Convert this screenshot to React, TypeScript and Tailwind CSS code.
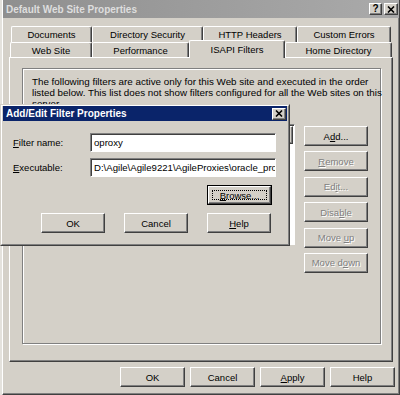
import React from "react";

const raised =
  "border border-t-white border-l-white border-r-[#404040] border-b-[#404040] shadow-[inset_-1px_-1px_0_#808080] bg-[#d4d0c8]";
const sunken =
  "border border-t-[#808080] border-l-[#808080] border-r-white border-b-white shadow-[inset_1px_1px_0_#404040]";

function Btn({
  className,
  children,
  disabled,
}: {
  className: string;
  children: React.ReactNode;
  disabled?: boolean;
}) {
  return (
    <div className={`${raised} flex items-center justify-center ${className}`}>
      <span
        className={
          disabled
            ? "text-[#808080] [text-shadow:1px_1px_0_#ffffff] whitespace-nowrap"
            : "text-black whitespace-nowrap"
        }
      >
        {children}
      </span>
    </div>
  );
}

function Tab({ className, children }: { className: string; children: React.ReactNode }) {
  return (
    <div
      className={`h-full flex items-center justify-center bg-[#d4d0c8] border-t border-l border-r border-t-white border-l-white border-r-[#404040] shadow-[inset_-1px_0_0_#808080] rounded-t-[2px] whitespace-nowrap ${className}`}
    >
      {children}
    </div>
  );
}

function CloseGlyph() {
  return (
    <svg width="8" height="7" viewBox="0 0 8 7">
      <path d="M1 0.5L7 6.5M7 0.5L1 6.5" stroke="#000" strokeWidth="1.6" fill="none" />
    </svg>
  );
}

export default function App() {
  return (
    <div className="w-[400px] h-[395px] flex bg-[#d4d0c8] relative overflow-hidden font-['Liberation_Sans',Arial,sans-serif] text-[9.5px] leading-[11px] text-black">
      <div className="w-[2px] h-full bg-[#e4e2dd]" />
      <div className="w-[398px] h-full flex flex-col border-l border-l-white border-r border-r-[#404040] border-b border-b-[#404040] shadow-[inset_-1px_-1px_0_#808080]">
        {/* title bar */}
        <div className="h-[18px] shrink-0 flex items-center bg-linear-to-r from-[#8f8f8f] to-[#aaaaaa] pl-[3px] pr-[1px]">
          <span className="flex-1 font-bold text-[10px] text-[#dedede] whitespace-nowrap">
            Default Web Site Properties
          </span>
          <div className={`${raised} w-[13px] h-[12px] flex items-center justify-center text-[10px] font-bold leading-none`}>
            ?
          </div>
          <div className={`${raised} ml-[2px] w-[14px] h-[12px] flex items-center justify-center`}>
            <CloseGlyph />
          </div>
        </div>

        {/* tabs back row */}
        <div className="mt-[8px] ml-[8px] h-[16px] flex">
          <Tab className="w-[81px]">Documents</Tab>
          <Tab className="w-[111px]">Directory Security</Tab>
          <Tab className="w-[94px]">HTTP Headers</Tab>
          <Tab className="w-[94px]">Custom Errors</Tab>
        </div>
        {/* tabs front row */}
        <div className="ml-[7px] h-[15px] flex items-end">
          <Tab className="w-[82px]">Web Site</Tab>
          <Tab className="w-[97px]">Performance</Tab>
          <div className="relative z-10 w-[96px] h-[18px] -mt-[2px] mb-[-1px] self-start flex items-start justify-center pt-[3px] bg-[#d4d0c8] border-t border-l border-r border-t-white border-l-white border-r-[#404040] shadow-[inset_-1px_0_0_#808080] rounded-t-[2px] whitespace-nowrap">
            ISAPI Filters
          </div>
          <Tab className="w-[107px]">Home Directory</Tab>
        </div>

        {/* panel */}
        <div className="ml-[6px] w-[384px] h-[305px] shrink-0 border border-t-white border-l-white border-r-[#404040] border-b-[#404040] shadow-[inset_-1px_-1px_0_#808080] flex flex-col">
          <div className="ml-[12px] mt-[10px] w-[359px] h-[276px] border border-[#808080] shadow-[inset_1px_1px_0_#ffffff,1px_1px_0_#ffffff] flex flex-col pl-[9px] pt-[7px]">
            <div className="h-[33px] text-[9.8px] leading-[11px] whitespace-nowrap">
              The following filters are active only for this Web site and executed in the order
              <br />
              listed below. This list does not show filters configured for all the Web sites on this
              <br />
              server.
            </div>
            <div className="mt-[15px] flex items-start">
              <div className={`${sunken} w-[263px] h-[121px] bg-white flex flex-col p-[1px]`}>
                <div className={`${raised} h-[18px] w-full`} />
              </div>
              <div className="ml-[9px] mt-[2px] flex flex-col gap-[5.4px]">
                <Btn className="w-[64px] h-[20px]">
                  A<u>d</u>d...
                </Btn>
                <Btn className="w-[64px] h-[20px]" disabled>
                  <u>R</u>emove
                </Btn>
                <Btn className="w-[64px] h-[20px]" disabled>
                  Ed<u>i</u>t...
                </Btn>
                <Btn className="w-[64px] h-[20px]" disabled>
                  Disa<u>b</u>le
                </Btn>
                <Btn className="w-[64px] h-[20px]" disabled>
                  Move <u>u</u>p
                </Btn>
                <Btn className="w-[64px] h-[20px]" disabled>
                  Move d<u>o</u>wn
                </Btn>
              </div>
            </div>
          </div>
        </div>

        {/* bottom buttons */}
        <div className="mt-[5px] flex justify-end gap-[5px] pr-[4px]">
          <Btn className="w-[65px] h-[20px]">OK</Btn>
          <Btn className="w-[65px] h-[20px]">Cancel</Btn>
          <Btn className="w-[65px] h-[20px]">
            <u>A</u>pply
          </Btn>
          <Btn className="w-[65px] h-[20px]">Help</Btn>
        </div>
      </div>

      {/* Add/Edit Filter Properties dialog */}
      <div className="absolute left-0 top-[104px] w-[290px] h-[142px] border border-t-[#d4d0c8] border-l-[#d4d0c8] border-r-[#404040] border-b-[#404040] bg-[#d4d0c8]">
        <div className="w-full h-full border border-t-white border-l-white border-r-[#808080] border-b-[#808080] px-[1px] pb-[1px] flex flex-col">
          <div className="h-[15px] shrink-0 bg-[#0a246a] flex items-center pl-[3px] pr-[1px]">
            <span className="flex-1 font-bold text-[10px] text-white whitespace-nowrap">
              Add/Edit Filter Properties
            </span>
            <div className={`${raised} w-[14px] h-[12px] flex items-center justify-center`}>
              <CloseGlyph />
            </div>
          </div>

          <div className="mt-[12px] h-[19px] flex items-center">
            <div className="w-[87px] pl-[10px]">
              <u>F</u>ilter name:
            </div>
            <div className={`${sunken} w-[186px] h-[19px] bg-white flex items-center pl-[3px] overflow-hidden whitespace-nowrap text-[9.6px]`}>
              oproxy
            </div>
          </div>
          <div className="mt-[6px] h-[19px] flex items-center">
            <div className="w-[87px] pl-[10px]">
              <u>E</u>xecutable:
            </div>
            <div className={`${sunken} w-[186px] h-[19px] bg-white flex items-center pl-[3px] overflow-hidden whitespace-nowrap text-[9.6px]`}>
              {"D:\\Agile\\Agile9221\\AgileProxies\\oracle_proxy.dll"}
            </div>
          </div>
          <div className="mt-[8px] ml-[204px] w-[65px] h-[20px] border border-black flex">
            <div className={`${raised} relative flex-1 flex items-center justify-center`}>
              <span>
                <u>B</u>rowse...
              </span>
              <div className="absolute left-[3px] top-[3px] right-[3px] bottom-[3px] border border-dotted border-black" />
            </div>
          </div>
          <div className="mt-[8px] ml-[38px] flex gap-[19px]">
            <Btn className="w-[64px] h-[20px]">OK</Btn>
            <Btn className="w-[64px] h-[20px]">Cancel</Btn>
            <Btn className="w-[64px] h-[20px]">
              <u>H</u>elp
            </Btn>
          </div>
        </div>
      </div>
    </div>
  );
}
